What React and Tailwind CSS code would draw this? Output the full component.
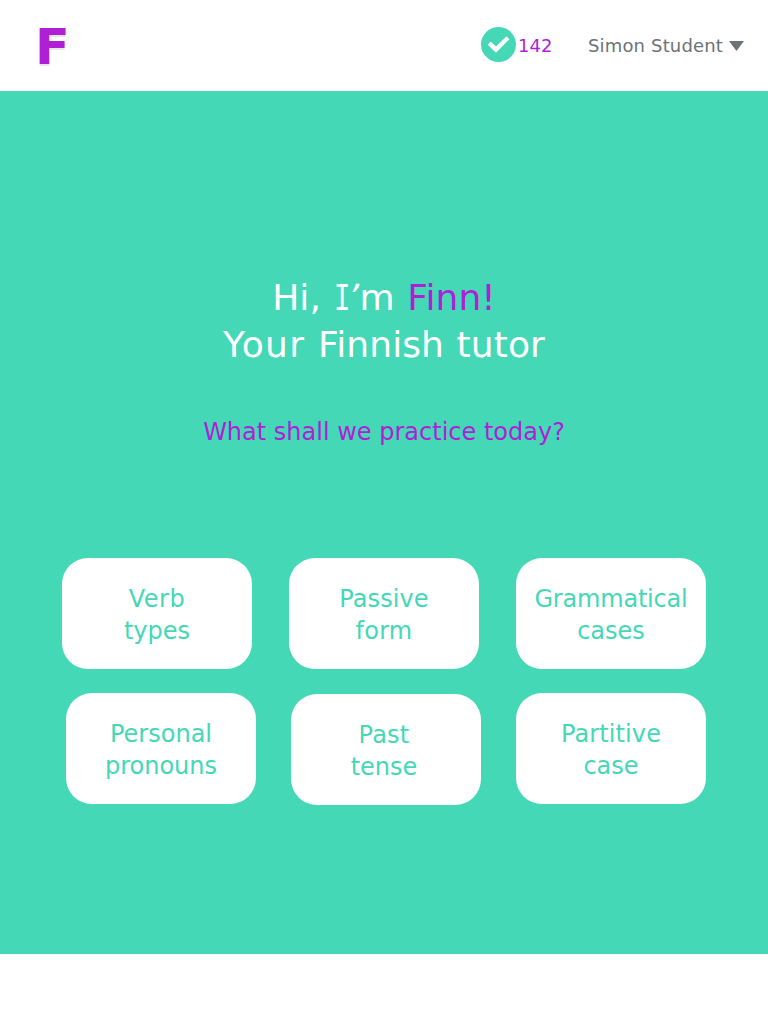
const font = "font-['DejaVu_Sans',Verdana,sans-serif]";

function Topic({ lines, className = "" }) {
  return (
    <button className={`flex h-[111px] w-[190px] shrink-0 flex-col items-center rounded-[26px] bg-white pt-[25px] text-[24px] leading-8 text-[#44d8b6] ${className}`}>
      {lines.map(([text, tracking]) => (
        <span key={text} className={`whitespace-nowrap ${tracking}`}>{text}</span>
      ))}
    </button>
  );
}

export default function App() {
  return (
    <div className={`flex h-[1024px] w-[768px] flex-col bg-white ${font}`}>
      <header className="flex h-[91px] items-start pr-6 pl-[35px]">
        <div className="origin-left scale-x-[1.02] pt-[18px] text-[50px] leading-[58px] font-bold text-[#ae1fd6] [text-shadow:0_2px_1px_#0000001a]">F</div>
        <div className="ml-auto flex pt-[27px]">
          <svg width="35" height="35" viewBox="0 0 35 35">
            <circle cx="17.5" cy="17.5" r="17.5" fill="#44d8b6" />
            <path d="M6.7 17.8L15 25.7L28.3 12.2L25.5 9.2L15 19.6L9.6 14.6Z" fill="white" />
          </svg>
          <span className="mt-px ml-[2px] w-[70px] text-[18px] leading-9 text-[#ae1fd6]">142</span>
          <span className="mt-px w-[135px] text-[18px] leading-9 tracking-[0.16px] whitespace-nowrap text-[#6d7278]">Simon Student</span>
          <svg className="mt-[14px] ml-[6px]" width="15" height="10" viewBox="0 0 15 10"><path d="M0 0H15L7.5 10Z" fill="#6d7278" /></svg>
        </div>
      </header>
      <main className="flex h-[863px] flex-col bg-[#44d8b6]">
        <h1 className="pt-[183px] text-center text-[36px] leading-[47px] tracking-[0.1px] text-white">
          <span className="block whitespace-nowrap">
            Hi, <span className="mr-[-1px] ml-[2px] inline-block w-[17px] origin-left scale-x-[0.75] font-['DejaVu_Sans_Mono',monospace] leading-none">I</span>
            <span className="inline-block w-[9px] -skew-x-[12deg] leading-none"><span className="-ml-[2px]">’</span></span>m{" "}
            <span className="ml-px text-[#ae1fd6]">Finn!</span>
          </span>
          <span className="block [word-spacing:1px]"><span className="tracking-[1.4px]">Your</span> Finnish tutor</span>
        </h1>
        <p className="mt-[48px] text-center text-[24px] leading-8 text-[#ae1fd6]">What shall we practice today?</p>
        <section className="mt-[110px] flex flex-col">
          <div className="flex gap-[37px] pl-[62px]">
            <Topic lines={[["Verb", "tracking-[0.5px]"], ["types", "tracking-[0px]"]]} />
            <Topic lines={[["Passive", "tracking-[0.1px]"], ["form", "tracking-[0.2px]"]]} />
            <Topic lines={[["Grammatical", "tracking-[-0.2px]"], ["cases", "tracking-[0px]"]]} />
          </div>
          <div className="flex pt-6 pl-[66px]">
            <Topic lines={[["Personal", "tracking-[0px]"], ["pronouns", "tracking-[0px]"]]} />
            <Topic lines={[["Past", "tracking-[0.2px]"], ["tense", "tracking-[0px]"]]} className="mt-px ml-[35px] pr-1" />
            <Topic lines={[["Partitive", "tracking-[0.1px]"], ["case", "tracking-[0px]"]]} className="ml-[35px]" />
          </div>
        </section>
      </main>
    </div>
  );
}
